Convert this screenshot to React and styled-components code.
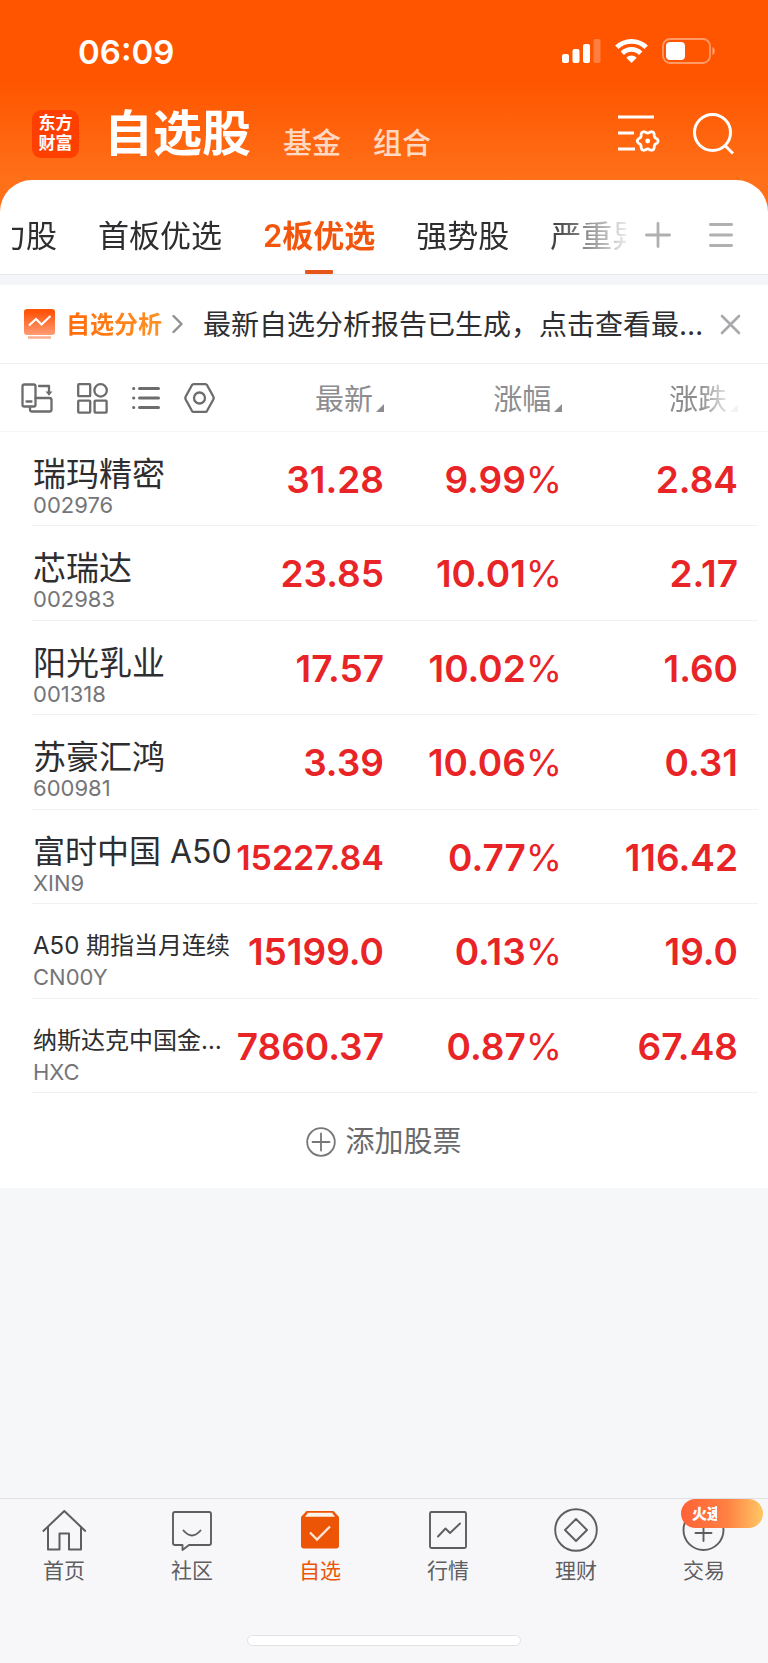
import React from "react";
import styled, { createGlobalStyle, css } from "styled-components";

const latin = `Inter, "Noto Sans CJK SC", sans-serif`;

const GlobalStyle = createGlobalStyle`
  *, *::before, *::after { box-sizing: border-box; }
  html { background: #f6f7f9; }
  body { margin: 0; font-family: ${latin}; color: #2e2e30; }
  button { font: inherit; color: inherit; background: none; border: 0; padding: 0; margin: 0; cursor: pointer; }
  a { color: inherit; text-decoration: none; }
  ul { list-style: none; margin: 0; padding: 0; }
  svg { display: block; flex: none; }
`;

const Page = styled.div`
  min-height: 100vh;
  display: flex;
  flex-direction: column;
  background: #f6f7f9;
`;

const Header = styled.header`
  background: linear-gradient(180deg, #ff5500 0, #ff5500 80px, #ff7019 180px);
  padding-bottom: 32px;
`;

const StatusBar = styled.div`
  height: 104px;
  padding: 0 52px 0 78px;
  display: flex;
  align-items: center;
  justify-content: space-between;
  color: #fff;
`;

const Clock = styled.time`
  font-size: 33px;
  font-weight: 600;
  line-height: 40px;
`;

const StatusIcons = styled.div`
  display: flex;
  align-items: center;
  gap: 14px;
  padding-bottom: 2px;
`;

const TitleBar = styled.div`
  height: 76px;
  padding: 4px 34px 20px 32px;
  display: flex;
  align-items: center;
  color: #fff;
`;

const Logo = styled.div`
  width: 47px;
  height: 48px;
  flex: none;
  border-radius: 9px;
  background: #ff3f00;
  font-size: 17px;
  font-weight: 700;
  line-height: 20px;
  padding: 3px 0;
  text-align: center;
`;

const Sections = styled.nav`
  display: flex;
  align-items: flex-end;
  gap: 32px;
  margin-left: 25px;
  flex: 1;
`;

const Section = styled.a`
  font-size: ${(p) => (p.$active ? 49 : 29)}px;
  font-weight: ${(p) => (p.$active ? 600 : 500)};
  line-height: ${(p) => (p.$active ? 54 : 34)}px;
  color: ${(p) => (p.$active ? "#fff" : "rgba(255, 255, 255, 0.76)")};
`;

const HeaderActions = styled.div`
  display: flex;
  align-items: center;
  gap: 33px;
`;

const IconButton = styled.button`
  display: flex;
  align-items: center;
  justify-content: center;
`;

const Sheet = styled.main`
  margin-top: -32px;
  border-radius: 32px 32px 0 0;
  background: #fff;
  overflow: hidden;
`;

const TabBar = styled.div`
  height: 95px;
  padding: 0 35px 0 12px;
  border-bottom: 1px solid #e9e9eb;
  display: flex;
  align-items: stretch;
`;

const TabViewport = styled.div`
  flex: 1;
  min-width: 0;
  overflow: hidden;
  display: flex;
  mask-image: linear-gradient(90deg, #000 calc(100% - 80px), rgba(0, 0, 0, 0.1) 100%);
`;

const TabList = styled.div`
  display: flex;
  gap: 41px;
  margin-left: -17px;
`;

const Tab = styled.a`
  flex: none;
  display: flex;
  flex-direction: column;
  justify-content: flex-end;
  align-items: center;
  gap: 11px;
  font-size: 31px;
  line-height: 46px;
  white-space: nowrap;
  color: ${(p) => (p.$active ? "#f2560d" : "#2e2e30")};
  font-weight: ${(p) => (p.$active ? 600 : 400)};

  &::after {
    content: "";
    width: 28px;
    height: 4px;
    border-radius: 1px;
    background: ${(p) => (p.$active ? "#e8551a" : "transparent")};
  }
`;

const TabTools = styled.div`
  display: flex;
  align-items: center;
  gap: 38px;
  margin-left: 19px;
  height: 110px;
  color: #b0b0b2;
`;

const Banner = styled.div`
  height: 89px;
  padding: 0 26px 0 24px;
  border-top: 10px solid #f4f5f8;
  border-bottom: 1px solid #f1f1f3;
  display: flex;
  align-items: center;
`;

const BannerLink = styled.a`
  display: flex;
  align-items: center;
  flex: 1;
  min-width: 0;
`;

const BannerTitle = styled.span`
  margin: 2px 10px 0;
  font-size: 24px;
  font-weight: 700;
  line-height: 36px;
  white-space: nowrap;
  background: linear-gradient(90deg, #ff6a0a, #ff9326);
  background-clip: text;
  color: transparent;
`;

const BannerText = styled.span`
  flex: 1;
  min-width: 0;
  margin: 2px 12px 0 20px;
  font-size: 28px;
  line-height: 40px;
  white-space: nowrap;
  overflow: hidden;
  text-overflow: ellipsis;
`;

const QuoteTable = styled.table`
  width: 100%;
  table-layout: fixed;
  border-collapse: collapse;
`;

const NameCol = styled.col` width: 30.5%; `;
const PriceCol = styled.col` width: 19.5%; `;
const RateCol = styled.col` width: 23.2%; `;
const ChangeCol = styled.col` width: 26.8%; `;

const HeadRow = styled.tr`
  height: 68px;
  background: linear-gradient(#f4f4f6, #f4f4f6) no-repeat 0 100% / 100% 1px;
`;

const HeadCell = styled.th`
  padding: 0 ${(p) => (p.$last ? 30 : 0)}px 0 0;
  font-size: 29px;
  font-weight: 400;
  line-height: 40px;
  color: #8d8d90;
`;

const ViewTools = styled.div`
  display: flex;
  align-items: center;
  gap: 24px;
  padding-left: 21px;
  color: #6c6c6f;
`;

const SortButton = styled.button`
  display: flex;
  align-items: center;
  gap: 3px;
  margin-left: auto;
  padding-top: 3px;
  ${(p) =>
    p.$fade &&
    css`
      mask-image: linear-gradient(90deg, #000 45%, rgba(0, 0, 0, 0.1) 90%);
    `}

  &::after {
    content: "";
    align-self: flex-end;
    margin-bottom: 8px;
    border-left: 8px solid transparent;
    border-bottom: 8px solid #8d8d90;
  }
`;

const Row = styled.tr`
  height: 94px;
  background: linear-gradient(#f1f1f3, #f1f1f3) no-repeat 32px 100% / calc(100% - 42px) 1px;

  &:nth-child(even) {
    height: 95px;
  }
`;

const NameCell = styled.th`
  padding: 20px 0 0 33px;
  text-align: left;
  vertical-align: top;
  font-weight: 400;
`;

const nameSizes = { small: 24, medium: 32, large: 33 };

const StockName = styled.div`
  font-size: ${(p) => nameSizes[p.$size || "large"]}px;
  line-height: 44px;
  white-space: nowrap;
`;

const StockCode = styled.div`
  font-size: 22px;
  line-height: 18px;
  color: #757578;
`;

const Value = styled.td`
  padding: 0 ${(p) => (p.$last ? 30 : 0)}px 0 0;
  text-align: right;
  font-size: ${(p) => (p.$small ? 34 : 37)}px;
  font-weight: 600;
  white-space: nowrap;
  color: #e82427;
`;

const Percent = styled.span`
  font-weight: 400;
`;

const AddButton = styled.button`
  width: 100%;
  height: 95px;
  padding-top: 2px;
  display: flex;
  align-items: center;
  justify-content: center;
  gap: 9px;
  font-size: 29px;
  line-height: 40px;
  color: #6a6a6d;
`;

const BottomNav = styled.nav`
  margin-top: auto;
  height: 165px;
  border-top: 1px solid #dfe1e6;
  background: #f7f7f9;
  display: flex;
  flex-direction: column;
  justify-content: space-between;
  align-items: center;
  padding-bottom: 17px;
`;

const NavList = styled.ul`
  width: 100%;
  display: flex;
`;

const NavItem = styled.li`
  flex: 1;
  position: relative;
`;

const NavLink = styled.a`
  display: flex;
  flex-direction: column;
  align-items: center;
  padding-top: 9px;
  gap: 3px;
  font-size: 21px;
  line-height: 32px;
  color: ${(p) => (p.$active ? "#eb5505" : "#5e5e61")};
`;

const Badge = styled.span`
  position: absolute;
  top: 0;
  right: 5px;
  width: 82px;
  height: 29px;
  padding-left: 11px;
  border-radius: 15px;
  background: linear-gradient(90deg, #ff6237, #ff7f42 55%, #ffc765);
  color: #fff;
  font-size: 15px;
  font-weight: 900;
  line-height: 30px;
`;

const BadgeText = styled.span`
  display: block;
  width: 25px;
  overflow: hidden;
  white-space: nowrap;
`;

const HomeIndicator = styled.div`
  width: 274px;
  height: 11px;
  border: 1px solid #e2e2e5;
  border-radius: 6px;
  background: #fff;
`;

const stroke = (width) => ({
  fill: "none",
  stroke: "currentColor",
  strokeWidth: width,
  strokeLinecap: "round",
  strokeLinejoin: "round",
  "aria-hidden": true,
});

/* Closed six-lobed outline used by the gear. */
const gearPath = (cx, cy, radius, depth) => {
  const steps = 72;
  const points = Array.from({ length: steps }, (_, i) => {
    const a = (i / steps) * Math.PI * 2;
    const r = radius + depth * Math.cos(6 * a);
    return `${(cx + r * Math.cos(a)).toFixed(2)} ${(cy + r * Math.sin(a)).toFixed(2)}`;
  });
  return `M${points.join("L")}Z`;
};

const SignalIcon = () => (
  <svg width="39" height="26" viewBox="0 0 39 26" fill="#fff" aria-hidden>
    <rect x="0" y="16" width="7" height="9" rx="2" />
    <rect x="10.500" y="11" width="7" height="14" rx="2" />
    <rect x="21" y="6" width="7" height="19" rx="2" />
    <rect x="31.500" y="1" width="7" height="24" rx="2" opacity=".25" />
  </svg>
);

const WifiIcon = () => (
  <svg width="33" height="26" viewBox="0 0 33 26" fill="none" stroke="#fff" strokeWidth="4.800" aria-hidden>
    <path d="M1.800 9.300a21 21 0 0 1 29.400 0" />
    <path d="M7.300 15.200a13 13 0 0 1 18.400 0" />
    <path d="M16.500 25l-5.200-5.300a7.400 7.400 0 0 1 10.400 0z" fill="#fff" stroke="none" />
  </svg>
);

const BatteryIcon = () => (
  <svg width="54" height="26" viewBox="0 0 54 26" fill="#fff" aria-hidden>
    <rect x="1" y="1" width="47" height="24" rx="7" fill="none" stroke="#fff" strokeWidth="1.800" opacity=".4" />
    <rect x="4" y="4" width="19" height="18" rx="4" />
    <path d="M50.500 9c2.800 1.200 2.800 6.800 0 8z" opacity=".5" />
  </svg>
);

const SettingsIcon = () => (
  <svg width="42" height="38" viewBox="0 0 42 38" {...stroke(2.8)} strokeLinecap="butt">
    <path d="M0 2h36M0 18h16M0 34h17" />
    <path d={gearPath(29.7, 26, 9.2, 1.2)} />
    <circle cx="29.700" cy="26" r="2.400" fill="currentColor" stroke="none" />
  </svg>
);

const SearchIcon = () => (
  <svg width="41" height="42" viewBox="0 0 41 42" {...stroke(3)} strokeLinecap="butt">
    <circle cx="19.500" cy="19.500" r="18" />
    <path d="M31.500 32l8.500 8.500" />
  </svg>
);

const PlusIcon = () => (
  <svg width="26" height="26" viewBox="0 0 26 26" {...stroke(2.8)}>
    <path d="M13 1.400v23.200M1.400 13h23.200" />
  </svg>
);

const MenuIcon = () => (
  <svg width="24" height="26" viewBox="0 0 24 26" {...stroke(2.8)}>
    <path d="M1.400 2.500h21.200M1.400 13h21.200M1.400 23.500h21.200" />
  </svg>
);

const ReportIcon = () => (
  <svg width="32" height="32" viewBox="0 0 32 32" fill="none" aria-hidden>
    <defs>
      <linearGradient id="report" x1="0" y1="0" x2="0" y2="1">
        <stop offset=".1" stopColor="#ff5308" />
        <stop offset="1" stopColor="#ff9c75" />
      </linearGradient>
    </defs>
    <rect x="0" y="1" width="31" height="26" rx="3" fill="url(#report)" />
    <path d="M5 17.500l7-6.500 5.500 5.500 9-8.500" stroke="#fff" strokeWidth="2.200" />
    <path d="M4 29.500h23" stroke="#ffad8e" strokeWidth="2.500" />
  </svg>
);

const ChevronIcon = () => (
  <svg width="11" height="20" viewBox="0 0 11 20" {...stroke(2.4)} stroke="#8f8f92">
    <path d="M1.500 2l8 8-8 8" />
  </svg>
);

const CloseIcon = () => (
  <svg width="22" height="22" viewBox="0 0 22 22" {...stroke(2.6)} stroke="#a9a9ac">
    <path d="M2 3l17 17M19 3L2 20" />
  </svg>
);

const RotateIcon = () => (
  <svg width="32" height="30" viewBox="0 0 32 30" {...stroke(2.3)}>
    <rect x="1.500" y="1.500" width="13" height="22" rx="1.800" />
    <path d="M5.500 18.500h5" />
    <path d="M9 24v2.500a2 2 0 0 0 2 2h17.500a2 2 0 0 0 2-2V17a2 2 0 0 0-2-2H14.500" />
    <path d="M18 3h10v8" />
    <path d="M24.500 8.500h7l-3.500 4z" fill="currentColor" stroke="none" />
  </svg>
);

const GridIcon = () => (
  <svg width="31" height="31" viewBox="0 0 31 31" {...stroke(2.3)}>
    <rect x="1.200" y="1.200" width="12" height="12" rx=".8" />
    <circle cx="23.600" cy="7.400" r="6.200" />
    <rect x="1.200" y="17.600" width="12" height="12" rx=".8" />
    <rect x="17.600" y="17.600" width="12" height="12" rx=".8" />
  </svg>
);

const ListIcon = () => (
  <svg width="28" height="24" viewBox="0 0 28 24" {...stroke(3)}>
    <path d="M7.500 2.500h19M7.500 12h19M7.500 21.500h19M1.600 2.500h.2M1.600 12h.2M1.600 21.500h.2" />
  </svg>
);

const HexIcon = () => (
  <svg width="31" height="30" viewBox="0 0 31 30" {...stroke(2.3)}>
    <path d="M9.500 1.200h12q1 0 1.600 1l6.200 11.300q.7 1.500 0 3L23.100 27.800q-.6 1-1.600 1h-12q-1 0-1.600-1L1.700 16.500q-.7-1.500 0-3L7.900 2.200q.6-1 1.600-1z" />
    <circle cx="15.500" cy="15" r="5.500" />
  </svg>
);

const AddIcon = () => (
  <svg width="30" height="30" viewBox="0 0 30 30" {...stroke(1.8)} stroke="#77777a">
    <circle cx="15" cy="15" r="13.800" />
    <path d="M15 6.500v17M6.500 15h17" />
  </svg>
);

const HomeIcon = () => (
  <svg width="44" height="44" viewBox="0 0 44 44" {...stroke(2)}>
    <path d="M.8 23.500L22.300 3 43.800 23.500" strokeLinecap="butt" />
    <path d="M6 19v22.500h11.500v-16H27v16h12V19" />
  </svg>
);

const ChatIcon = () => (
  <svg width="44" height="44" viewBox="0 0 44 44" {...stroke(1.9)}>
    <path d="M5 4h34a2 2 0 0 1 2 2v29a2 2 0 0 1-2 2H19l-6.500 5v-5H5a2 2 0 0 1-2-2V6a2 2 0 0 1 2-2z" />
    <path d="M13.500 22.500q8.500 10 17 0" />
  </svg>
);

const PickIcon = () => (
  <svg width="44" height="44" viewBox="0 0 44 44" fill="none" aria-hidden>
    <path d="M8.500 3h27l5.500 6v28.500a3 3 0 0 1-3 3H6a3 3 0 0 1-3-3V9z" fill="currentColor" />
    <path d="M10 4.800h24l3 4H7z" fill="#fff4ec" />
    <path d="M12 24.500l7 7L32 18.500" stroke="#ffe6d8" strokeWidth="2.300" />
  </svg>
);

const MarketIcon = () => (
  <svg width="44" height="44" viewBox="0 0 44 44" {...stroke(1.9)}>
    <rect x="4" y="4" width="36" height="36" rx="1.500" />
    <path d="M12 28.500l7.500-8 4.500 4.500L34 15.500" />
  </svg>
);

const WealthIcon = () => (
  <svg width="44" height="44" viewBox="0 0 44 44" {...stroke(1.9)}>
    <circle cx="22" cy="22" r="20.800" />
    <path d="M22 11l11 11-11 11-11-11z" />
  </svg>
);

const TradeIcon = () => (
  <svg width="44" height="44" viewBox="0 0 44 44" {...stroke(1.9)}>
    <circle cx="21.500" cy="22" r="20" />
    <path d="M21.500 15v18M13.500 25h16" />
  </svg>
);

const tabs = ["力股", "首板优选", "2板优选", "强势股", "严重异动"];

const stocks = [
  { name: "瑞玛精密", code: "002976", price: "31.28", rate: "9.99", change: "2.84" },
  { name: "芯瑞达", code: "002983", price: "23.85", rate: "10.01", change: "2.17" },
  { name: "阳光乳业", code: "001318", price: "17.57", rate: "10.02", change: "1.60" },
  { name: "苏豪汇鸿", code: "600981", price: "3.39", rate: "10.06", change: "0.31" },
  { name: "富时中国 A50", code: "XIN9", price: "15227.84", rate: "0.77", change: "116.42", size: "medium", smallPrice: true },
  { name: "A50 期指当月连续", code: "CN00Y", price: "15199.0", rate: "0.13", change: "19.0", size: "small" },
  { name: "纳斯达克中国金…", code: "HXC", price: "7860.37", rate: "0.87", change: "67.48", size: "small" },
];

const navItems = [
  { label: "首页", Icon: HomeIcon },
  { label: "社区", Icon: ChatIcon },
  { label: "自选", Icon: PickIcon, active: true },
  { label: "行情", Icon: MarketIcon },
  { label: "理财", Icon: WealthIcon },
  { label: "交易", Icon: TradeIcon, badge: "火速" },
];

export default function App() {
  return (
    <Page>
      <GlobalStyle />
      <Header>
        <StatusBar>
          <Clock>06:09</Clock>
          <StatusIcons>
            <SignalIcon />
            <WifiIcon />
            <BatteryIcon />
          </StatusIcons>
        </StatusBar>
        <TitleBar>
          <Logo>东方<br />财富</Logo>
          <Sections>
            <Section href="#stocks" $active>自选股</Section>
            <Section href="#funds">基金</Section>
            <Section href="#portfolio">组合</Section>
          </Sections>
          <HeaderActions>
            <IconButton aria-label="设置"><SettingsIcon /></IconButton>
            <IconButton aria-label="搜索"><SearchIcon /></IconButton>
          </HeaderActions>
        </TitleBar>
      </Header>

      <Sheet>
        <TabBar>
          <TabViewport>
            <TabList>
              {tabs.map((t) => (
                <Tab key={t} href="#tab" $active={t === "2板优选"}>{t}</Tab>
              ))}
            </TabList>
          </TabViewport>
          <TabTools>
            <IconButton aria-label="添加分组"><PlusIcon /></IconButton>
            <IconButton aria-label="分组菜单"><MenuIcon /></IconButton>
          </TabTools>
        </TabBar>

        <Banner>
          <BannerLink href="#report">
            <ReportIcon />
            <BannerTitle>自选分析</BannerTitle>
            <ChevronIcon />
            <BannerText>最新自选分析报告已生成，点击查看最新自选分析报告</BannerText>
          </BannerLink>
          <IconButton aria-label="关闭"><CloseIcon /></IconButton>
        </Banner>

        <QuoteTable>
          <colgroup>
            <NameCol />
            <PriceCol />
            <RateCol />
            <ChangeCol />
          </colgroup>
          <thead>
            <HeadRow>
              <HeadCell>
                <ViewTools>
                  <IconButton aria-label="横屏"><RotateIcon /></IconButton>
                  <IconButton aria-label="宫格"><GridIcon /></IconButton>
                  <IconButton aria-label="列表"><ListIcon /></IconButton>
                  <IconButton aria-label="列表设置"><HexIcon /></IconButton>
                </ViewTools>
              </HeadCell>
              <HeadCell><SortButton>最新</SortButton></HeadCell>
              <HeadCell><SortButton>涨幅</SortButton></HeadCell>
              <HeadCell $last><SortButton $fade>涨跌</SortButton></HeadCell>
            </HeadRow>
          </thead>
          <tbody>
            {stocks.map((s) => (
              <Row key={s.code}>
                <NameCell scope="row">
                  <StockName $size={s.size}>{s.name}</StockName>
                  <StockCode>{s.code}</StockCode>
                </NameCell>
                <Value $small={s.smallPrice}>{s.price}</Value>
                <Value>{s.rate}<Percent>%</Percent></Value>
                <Value $last>{s.change}</Value>
              </Row>
            ))}
          </tbody>
        </QuoteTable>
        <AddButton><AddIcon />添加股票</AddButton>
      </Sheet>

      <BottomNav>
        <NavList>
          {navItems.map(({ label, Icon, active, badge }) => (
            <NavItem key={label}>
              <NavLink href="#nav" $active={active}>
                <Icon />
                {label}
              </NavLink>
              {badge && <Badge><BadgeText>{badge}</BadgeText></Badge>}
            </NavItem>
          ))}
        </NavList>
        <HomeIndicator />
      </BottomNav>
    </Page>
  );
}
